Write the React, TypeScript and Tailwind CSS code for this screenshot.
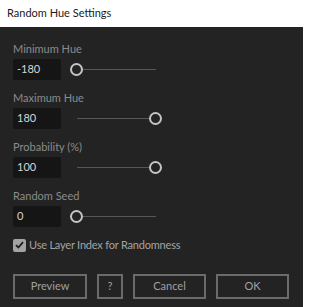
import React from 'react';

const font = { fontFamily: 'Lato, "Liberation Sans", sans-serif' };

function Slider({ value }: { value: number }) {
  // value: 0..1 position of the knob
  return (
    <div className="relative ml-[9px] h-[21px] w-[93px]">
      <div className="absolute left-[7px] right-[7px] top-[10px] h-px bg-[#575757]" />
      <div
        className="absolute top-[4px] h-[13px] w-[13px] rounded-full border-2 border-[#c4c4c4] bg-[#232323]"
        style={{ left: `${value * 79}px` }}
      />
    </div>
  );
}

function Field({ label, value, knob }: { label: string; value: string; knob: number }) {
  return (
    <div className="flex flex-col">
      <div className="h-4 text-[11px] leading-4 text-[#8b8b8b]">{label}</div>
      <div className="mt-[2px] flex items-center">
        <div className="flex h-[21px] w-[48px] items-center rounded-[2px] bg-[#151515] pl-[4px] text-[11px] text-[#d6d6d6]">
          {value}
        </div>
        <Slider value={knob} />
      </div>
    </div>
  );
}

function Button({ children, w }: { children: React.ReactNode; w: string }) {
  return (
    <button
      className={`flex h-[25px] items-center justify-center border-2 border-[#6b6b6b] text-[11px] text-[#a0a0a0] ${w}`}
    >
      {children}
    </button>
  );
}

export default function App() {
  return (
    <div className="flex h-[307px] w-[303px] flex-col bg-[#232323]" style={font}>
      <div className="flex h-[27px] items-center bg-white px-[7px] text-[11px] text-[#1b1b1b]">
        Random Hue Settings
      </div>
      <div className="flex flex-col gap-[10px] px-[13px] pt-[14px]">
        <Field label="Minimum Hue" value="-180" knob={0} />
        <Field label="Maximum Hue" value="180" knob={1} />
        <Field label="Probability (%)" value="100" knob={1} />
        <Field label="Random Seed" value="0" knob={0} />
      </div>
      <div className="mt-[9px] flex h-[18px] items-center gap-[3px] px-[13px]">
        <div className="flex h-[13px] w-[13px] items-center justify-center rounded-[2px] bg-[#a3a3a3]">
          <svg width="9" height="8" viewBox="0 0 9 8" fill="none">
            <path d="M1 4.2L3.4 6.5L8 1.2" stroke="#1e1e1e" strokeWidth="1.8" />
          </svg>
        </div>
        <span className="text-[11px] tracking-[-0.2px] text-[#a3a3a3]">Use Layer Index for Randomness</span>
      </div>
      <div className="mt-[20px] flex gap-[10px] px-[13px]">
        <Button w="w-[74px]">Preview</Button>
        <Button w="w-[26px]">?</Button>
        <Button w="w-[73px]">Cancel</Button>
        <Button w="w-[73px]">OK</Button>
      </div>
    </div>
  );
}
